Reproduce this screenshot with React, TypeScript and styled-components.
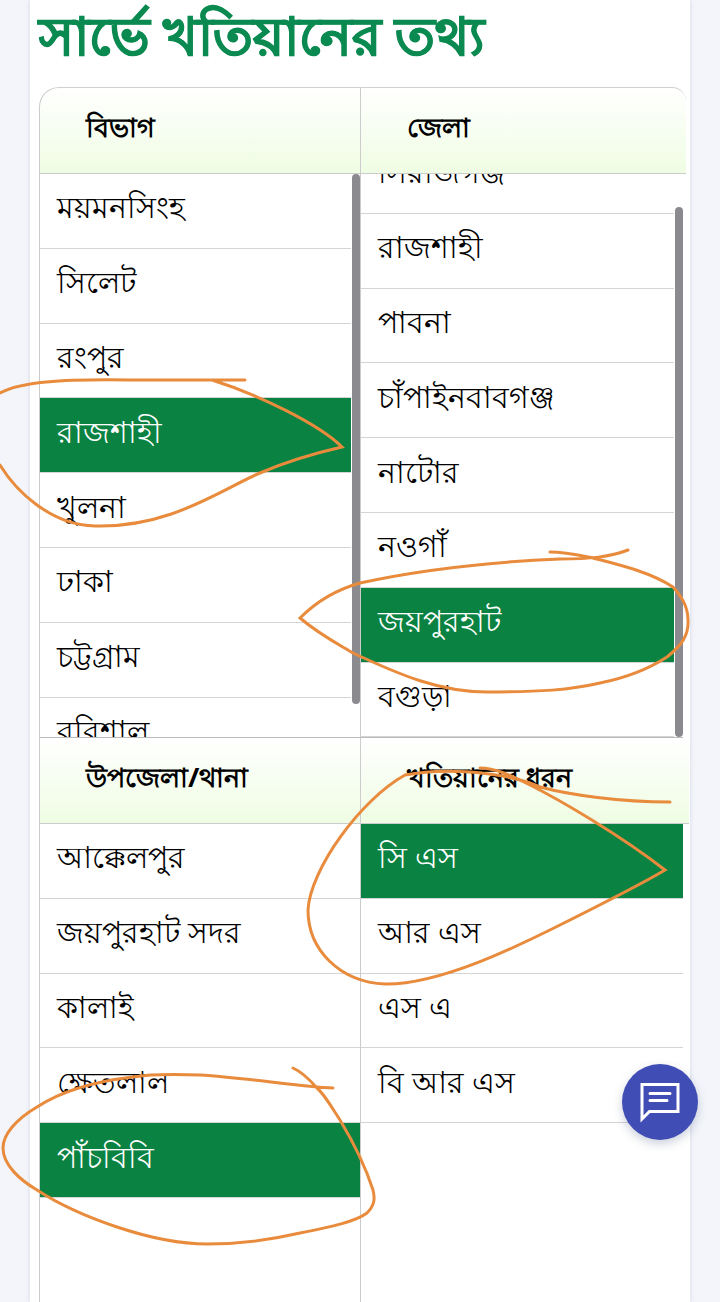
import React from 'react'
import styled, { createGlobalStyle } from 'styled-components'

interface Column {
  title: string
  rows: string[]
  selected: string
  offset?: number
  thumb?: { top: number; height: number }
}

const topColumns: Column[] = [
  {
    title: 'বিভাগ',
    rows: ['ময়মনসিংহ', 'সিলেট', 'রংপুর', 'রাজশাহী', 'খুলনা', 'ঢাকা', 'চট্টগ্রাম', 'বরিশাল'],
    selected: 'রাজশাহী',
    thumb: { top: 0, height: 530 },
  },
  {
    title: 'জেলা',
    rows: ['সিরাজগঞ্জ', 'রাজশাহী', 'পাবনা', 'চাঁপাইনবাবগঞ্জ', 'নাটোর', 'নওগাঁ', 'জয়পুরহাট', 'বগুড়া'],
    selected: 'জয়পুরহাট',
    offset: 35,
    thumb: { top: 33, height: 530 },
  },
]

const bottomColumns: Column[] = [
  {
    title: 'উপজেলা/থানা',
    rows: ['আক্কেলপুর', 'জয়পুরহাট সদর', 'কালাই', 'ক্ষেতলাল', 'পাঁচবিবি'],
    selected: 'পাঁচবিবি',
  },
  {
    title: 'খতিয়ানের ধরন',
    rows: ['সি এস', 'আর এস', 'এস এ', 'বি আর এস'],
    selected: 'সি এস',
  },
]

function ColumnView({ column, index, tall }: { column: Column; index: number; tall: boolean }) {
  return (
    <Cell>
      <Header $top={tall} $first={index === 0}>
        <HeaderLabel>{column.title}</HeaderLabel>
      </Header>
      <List $tall={tall}>
        <Rows $offset={column.offset || 0} $narrow={!!column.thumb}>
          {column.rows.map((row) => (
            <Row key={row} $selected={row === column.selected}>
              {row}
            </Row>
          ))}
        </Rows>
        {column.thumb && <Thumb style={{ top: column.thumb.top, height: column.thumb.height }} />}
      </List>
    </Cell>
  )
}

function App() {
  return (
    <Page>
      <GlobalStyle />
      <Sheet>
        <Title>সার্ভে খতিয়ানের তথ্য</Title>
        <Grid>
          {topColumns.map((column, idx) => (
            <ColumnView key={column.title} column={column} index={idx} tall />
          ))}
          {bottomColumns.map((column, idx) => (
            <ColumnView key={column.title} column={column} index={idx} tall={false} />
          ))}
        </Grid>
      </Sheet>
      <ChatButton>
        <svg width="44" height="44" viewBox="0 0 44 44" fill="none" stroke="#fff" strokeWidth="3">
          <path d="M4 4.5h36v27H11.5L4 39z" strokeLinejoin="miter" />
          <path d="M12 13.5h20M12 20.5h17" strokeLinecap="round" />
        </svg>
      </ChatButton>
      <Scribble viewBox="0 0 720 1302">
        <path d="M245 380 L130 380 C60 379 20 382 0 393 M0 465 C15 490 50 525 95 526 C170 528 220 490 260 473 C290 460 320 452 342 447 C320 425 260 395 212 380" />
        <path d="M628 550 C610 557 590 559 560 559 C490 562 420 570 360 583 C335 590 315 603 300 618 C320 635 340 645 353 653 C400 675 440 692 487 692 C540 692 570 690 600 683 C630 677 650 668 667 657 C682 645 689 635 688 620 C688 605 680 595 673 587 C650 572 620 565 593 558 C578 555 565 552 550 552" />
        <path d="M670 802 C620 802 570 795 540 787 C500 770 440 768 405 775 C360 800 310 870 308 910 C308 950 340 982 385 984 C440 985 520 945 560 925 C600 905 640 885 665 870 C620 835 560 800 530 785 C510 775 495 768 480 768" />
        <path d="M333 1088 C300 1087 250 1078 200 1075 C170 1074 150 1074 133 1077 C90 1082 60 1092 37 1107 C15 1120 3 1135 3 1148 C3 1165 20 1180 37 1190 C60 1205 90 1218 117 1227 C150 1238 180 1244 207 1244 C240 1244 270 1240 300 1233 C330 1227 355 1222 367 1213 C375 1205 375 1198 373 1190 C365 1165 352 1140 340 1120 C330 1105 325 1095 317 1088 C310 1080 302 1072 293 1068" />
      </Scribble>
    </Page>
  )
}

const GlobalStyle = createGlobalStyle`
  html, body {
    margin: 0;
    padding: 0;
    background: #f3f5fa;
  }
`

const Page = styled.div`
  position: relative;
  width: 720px;
  height: 1302px;
  overflow: hidden;
  background: #f3f5fa;
  font-family: 'Noto Sans', 'Liberation Sans', sans-serif;
`

const Sheet = styled.div`
  width: 660px;
  height: 1302px;
  margin-left: 30px;
  padding-left: 9px;
  box-sizing: border-box;
  background: #fff;
  box-shadow: 0 0 4px rgba(150, 160, 180, 0.35);
`

const Title = styled.h1`
  height: 87px;
  margin: 0;
  color: #0a8a50;
  font-size: 53px;
  font-weight: 700;
  line-height: 70px;
  white-space: nowrap;
  -webkit-text-stroke: 1px #0a8a50;
`

const Grid = styled.div`
  display: grid;
  grid-template-columns: 321px 323px;
`

const Cell = styled.div`
  min-width: 0;
`

const Header = styled.div<{ $top: boolean; $first: boolean }>`
  display: flex;
  align-items: center;
  height: ${(p) => (p.$top ? '87px' : '86px')};
  margin-right: ${(p) => (p.$first ? '0' : p.$top ? '-3px' : '-6px')};
  padding: 0 0 2px 46px;
  box-sizing: border-box;
  border-top: ${(p) => (p.$top ? '1px solid #d0d0d0' : 'none')};
  border-left: 1px solid #ccc;
  border-bottom: 1px solid #ccc;
  border-radius: ${(p) => (!p.$top ? '0' : p.$first ? '20px 0 0 0' : '0 14px 0 0')};
  background: linear-gradient(180deg, #fff 0%, #effde3 100%);
`

const HeaderLabel = styled.span`
  color: #000;
  font-size: 27.4px;
  font-weight: 700;
  white-space: nowrap;
`

const List = styled.div<{ $tall: boolean }>`
  position: relative;
  overflow: hidden;
  height: ${(p) => (p.$tall ? '564px' : '480px')};
  box-sizing: border-box;
  border-bottom: ${(p) => (p.$tall ? '1px solid #bbb' : 'none')};
  border-left: 1px solid #ccc;
`

const Rows = styled.div<{ $offset: number; $narrow: boolean }>`
  margin-top: ${(p) => -p.$offset}px;
  margin-right: ${(p) => (p.$narrow ? '9px' : '0')};
`

const Row = styled.div<{ $selected: boolean }>`
  display: flex;
  align-items: center;
  height: 74.8px;
  padding: 0 0 2px 17px;
  box-sizing: border-box;
  border-bottom: 1px solid #d4d4d4;
  background: ${(p) => (p.$selected ? '#0a8242' : 'transparent')};
  color: ${(p) => (p.$selected ? '#fff' : '#000')};
  font-size: 30px;
  white-space: nowrap;
`

const Thumb = styled.div`
  position: absolute;
  right: 0;
  width: 8px;
  border-radius: 4px;
  background: #8b8b8f;
`

const ChatButton = styled.div`
  position: absolute;
  left: 622px;
  top: 1064px;
  display: flex;
  align-items: center;
  justify-content: center;
  width: 76px;
  height: 76px;
  border-radius: 50%;
  background: #3f4db5;
  box-shadow: 0 4px 10px rgba(60, 70, 120, 0.25);
`

const Scribble = styled.svg`
  position: absolute;
  left: 0;
  top: 0;
  width: 720px;
  height: 1302px;
  fill: none;
  stroke: #e98b3c;
  stroke-width: 3;
  stroke-linecap: round;
  pointer-events: none;
`

export default App
